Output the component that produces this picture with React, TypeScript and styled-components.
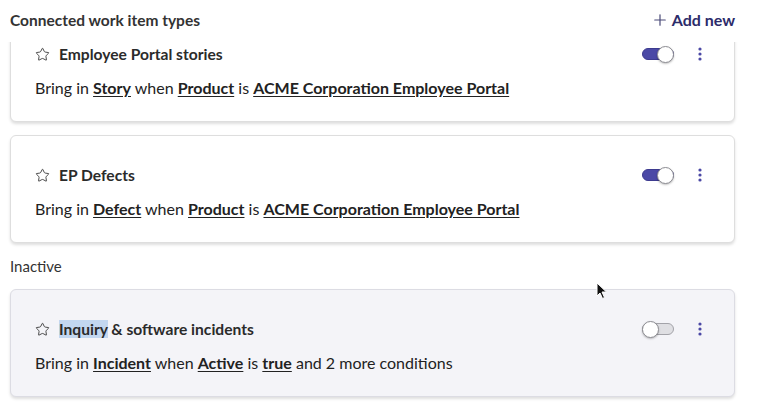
import React, { useLayoutEffect, useRef } from 'react';
import styled, { createGlobalStyle } from 'styled-components';
import { Plus, Star } from 'lucide-react';

const GlobalStyle = createGlobalStyle`
    html, body {
        margin: 0;
        padding: 0;
        background: #fff;
        font-family: Lato, "Open Sans", sans-serif;
        color: #2b2b2b;
    }
`

const Page = styled.div`
    width: 768px;
    height: 408px;
    position: relative;
    overflow: hidden;
    display: flex;
    flex-direction: column;
`

const Header = styled.div`
    display: flex;
    align-items: center;
    justify-content: space-between;
    height: 42px;
    padding: 0 33px 0 10px;
    flex-shrink: 0;
    box-sizing: border-box;
`

const Heading = styled.h2`
    margin: 0;
    font-size: 15.5px;
    font-weight: 700;
    color: #333;
    padding-bottom: 3px;
`

const AddButton = styled.button`
    display: flex;
    align-items: center;
    gap: 3px;
    border: none;
    background: none;
    padding: 0;
    font-family: inherit;
    font-size: 16px;
    font-weight: 700;
    color: #2c2b6a;
    cursor: pointer;
    padding-bottom: 3px;
    svg { color: #4a4a78; }
`

const Viewport = styled.div`
    flex: 1;
    overflow: hidden;
    padding: 0 33px 0 10px;
`

const List = styled.div`
    display: flex;
    flex-direction: column;
    gap: 13px;
    padding-bottom: 20px;
`

const SectionLabel = styled.div`
    font-size: 15px;
    color: #333;
    line-height: 20px;
`

const Card = styled.div<{ $inactive?: boolean }>`
    border: 1px solid ${p => (p.$inactive ? '#dcdce3' : '#dedede')};
    border-radius: 6px;
    background: ${p => (p.$inactive ? '#f4f4f8' : '#fff')};
    box-shadow: 0 2px 3px rgba(0, 0, 0, 0.13);
    padding: 29px 30px 22px 24px;
`

const TitleRow = styled.div`
    display: flex;
    align-items: center;
    height: 20px;
    margin-bottom: 13px;
`

const Title = styled.div`
    display: flex;
    align-items: center;
    gap: 9px;
    flex: 1;
    font-size: 15.6px;
    font-weight: 700;
    color: #2b2b2b;
    svg { color: #333; flex-shrink: 0; }
`

const Selected = styled.span`
    background: #c3d7f0;
`

const Actions = styled.div`
    display: flex;
    align-items: center;
    gap: 22px;
`

const Track = styled.div<{ $on: boolean }>`
    position: relative;
    width: 32px;
    height: 12px;
    border-radius: 7px;
    box-sizing: border-box;
    background: ${p => (p.$on ? '#4b49a6' : '#dfdfe3')};
    border: 1px solid ${p => (p.$on ? '#3d3b8f' : '#a3a3a9')};
`

const Knob = styled.div<{ $on: boolean }>`
    position: absolute;
    top: 50%;
    ${p => (p.$on ? 'right: -1px;' : 'left: -1px;')}
    width: 17px;
    height: 17px;
    margin-top: -8.5px;
    border-radius: 50%;
    background: #fff;
    border: 1px solid #8d8d93;
    box-sizing: border-box;
    box-shadow: 0 1px 2px rgba(0, 0, 0, 0.25);
`

const MenuButton = styled.button`
    border: none;
    background: none;
    padding: 0;
    width: 8px;
    display: flex;
    justify-content: center;
    color: #4b48a5;
    cursor: pointer;
`

const Rule = styled.p`
    margin: 0;
    font-size: 16px;
    line-height: 22px;
    color: #222;
    b {
        font-weight: 700;
        text-decoration: underline;
        text-underline-offset: 2px;
    }
`

const Pointer = styled.svg`
    position: absolute;
    left: 596px;
    top: 282px;
`

const Kebab = () => (
    <svg width="4" height="14" viewBox="0 0 4 14">
        <circle cx="2" cy="2" r="1.6" fill="currentColor" />
        <circle cx="2" cy="7" r="1.6" fill="currentColor" />
        <circle cx="2" cy="12" r="1.6" fill="currentColor" />
    </svg>
)

const Toggle = ({ on }: { on: boolean }) => (
    <Track $on={on}>
        <Knob $on={on} />
    </Track>
)

type Item = {
    title: React.ReactNode;
    rule: React.ReactNode;
    on: boolean;
};

const ItemCard = ({ item }: { item: Item }) => (
    <Card $inactive={!item.on}>
        <TitleRow>
            <Title>
                <Star size={15} strokeWidth={1.4} />
                <span>{item.title}</span>
            </Title>
            <Actions>
                <Toggle on={item.on} />
                <MenuButton><Kebab /></MenuButton>
            </Actions>
        </TitleRow>
        <Rule>{item.rule}</Rule>
    </Card>
)

const active: Item[] = [
    {
        title: 'Employee Portal stories',
        rule: <>Bring in <b>Story</b> when <b>Product</b> is <b>ACME Corporation Employee Portal</b></>,
        on: true,
    },
    {
        title: 'EP Defects',
        rule: <>Bring in <b>Defect</b> when <b>Product</b> is <b>ACME Corporation Employee Portal</b></>,
        on: true,
    },
];

const inactive: Item[] = [
    {
        title: <><Selected>Inquiry</Selected> &amp; software incidents</>,
        rule: <>Bring in <b>Incident</b> when <b>Active</b> is <b>true</b> and 2 more conditions</>,
        on: false,
    },
];

const App = (): JSX.Element => {
    const viewport = useRef<HTMLDivElement>(null);

    // the list is shown scrolled a little past the first card's top
    useLayoutEffect(() => {
        if (viewport.current) viewport.current.scrollTop = 28;
    }, []);

    return (
        <Page>
            <GlobalStyle />
            <Header>
                <Heading>Connected work item types</Heading>
                <AddButton><Plus size={18} strokeWidth={1.6} />Add new</AddButton>
            </Header>
            <Viewport ref={viewport}>
                <List>
                    {active.map((item, i) => <ItemCard key={i} item={item} />)}
                    <SectionLabel>Inactive</SectionLabel>
                    {inactive.map((item, i) => <ItemCard key={i} item={item} />)}
                </List>
            </Viewport>
            <Pointer width="12" height="18" viewBox="0 0 12 18">
                <path d="M1 1 L1 14 L4 11 L6.5 16.5 L8.5 15.5 L6 10 L10.5 10 Z" fill="#111" stroke="#fff" strokeWidth="1" />
            </Pointer>
        </Page>
    )
}

export default App;
